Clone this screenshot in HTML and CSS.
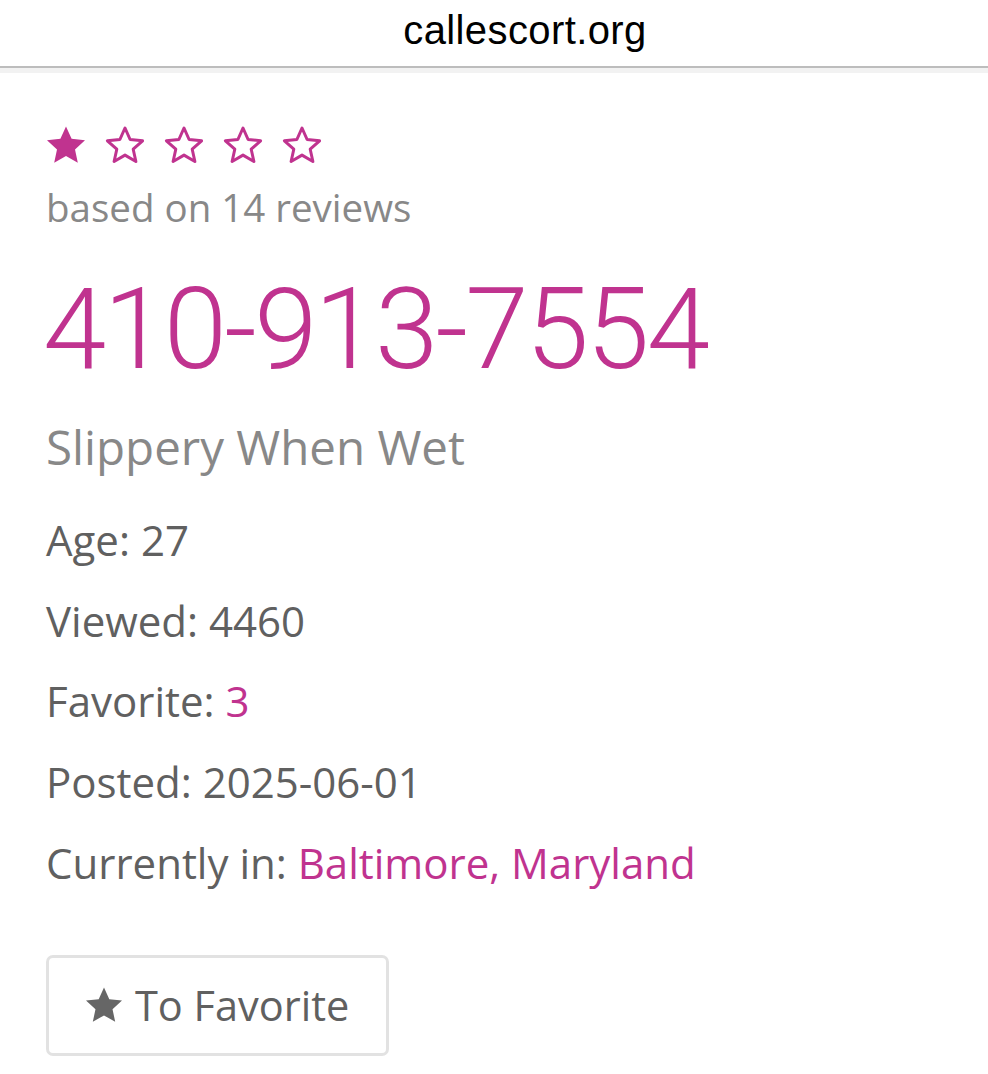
FILE: index.html
```html
<html>

<head>
  <link rel="stylesheet" href="styles.css">
</head>

<body>
  <div class="topbar">
    <span class="domain">callescort.org</span>
  </div>
  <div class="topline"></div>

  <div class="content">
    <div class="rating">
      <div class="stars">
        <svg class="star" viewBox="0 0 40 38"><path class="full" d="M20 0.5 L25.6 12.8 L39 14.3 L29 23.4 L31.8 36.7 L20 30 L8.2 36.7 L11 23.4 L1 14.3 L14.4 12.8 Z" /></svg>
        <svg class="star" viewBox="0 0 40 38"><path class="empty" d="M20 2 L25.1 13.5 L37.6 14.8 L28.2 23.2 L30.9 35.5 L20 29.1 L9.1 35.5 L11.8 23.2 L2.4 14.8 L14.9 13.5 Z" /></svg>
        <svg class="star" viewBox="0 0 40 38"><path class="empty" d="M20 2 L25.1 13.5 L37.6 14.8 L28.2 23.2 L30.9 35.5 L20 29.1 L9.1 35.5 L11.8 23.2 L2.4 14.8 L14.9 13.5 Z" /></svg>
        <svg class="star" viewBox="0 0 40 38"><path class="empty" d="M20 2 L25.1 13.5 L37.6 14.8 L28.2 23.2 L30.9 35.5 L20 29.1 L9.1 35.5 L11.8 23.2 L2.4 14.8 L14.9 13.5 Z" /></svg>
        <svg class="star" viewBox="0 0 40 38"><path class="empty" d="M20 2 L25.1 13.5 L37.6 14.8 L28.2 23.2 L30.9 35.5 L20 29.1 L9.1 35.5 L11.8 23.2 L2.4 14.8 L14.9 13.5 Z" /></svg>
      </div>
      <div class="reviews">based on 14 reviews</div>
    </div>

    <h1 class="phone">410-913-7554</h1>
    <h2 class="title">Slippery When Wet</h2>

    <div class="info">
      <p>Age: 27</p>
      <p>Viewed: 4460</p>
      <p>Favorite: <a href="#">3</a></p>
      <p>Posted: 2025-06-01</p>
      <p>Currently in: <a href="#">Baltimore, Maryland</a></p>
    </div>

    <button class="fav-btn">
      <svg class="btn-star" viewBox="0 0 40 38"><path d="M20 0.5 L25.6 12.8 L39 14.3 L29 23.4 L31.8 36.7 L20 30 L8.2 36.7 L11 23.4 L1 14.3 L14.4 12.8 Z" /></svg>
      <span>To Favorite</span>
    </button>
  </div>
</body>

</html>
```

FILE: styles.css
```css
body {
  margin: 0;
  padding: 0;
  background-color: #ffffff;
  font-family: "Open Sans", sans-serif;
  overflow: hidden;
}

.topbar {
  height: 68px;
  display: flex;
  justify-content: center;
  align-items: center;
  border-bottom: 2px solid #bdbdbd;
  box-sizing: border-box;
}

.domain {
  font-family: "Liberation Sans", Arial, sans-serif;
  font-size: 40px;
  letter-spacing: 0.4px;
  color: #000000;
  margin-left: 62px;
  margin-top: -6px;
}

.topline {
  height: 5px;
  background-color: #f2f2f2;
}

.content {
  padding: 0 46px;
}

.rating {
  padding-top: 53px;
}

.stars {
  display: flex;
  gap: 19px;
  height: 40px;
}

.star {
  width: 40px;
  height: 38px;
}

.star .full {
  fill: #c0338f;
}

.star .empty {
  fill: none;
  stroke: #c0338f;
  stroke-width: 3;
  stroke-linejoin: round;
}

.reviews {
  font-size: 38.5px;
  color: #888888;
  line-height: 40px;
  margin-top: 21px;
}

.phone {
  font-family: Roboto, sans-serif;
  font-weight: 300;
  font-size: 114px;
  letter-spacing: -2.8px;
  color: #c0338f;
  margin: 37px 0 0 -3px;
  line-height: 130px;
}

.title {
  font-weight: 400;
  font-size: 47.5px;
  color: #888888;
  margin: 23px 0 0 0;
  line-height: 60px;
}

.info {
  margin-top: 23px;
}

.info p {
  font-size: 42px;
  color: #606060;
  margin: 0;
  line-height: 80.7px;
}

.info a {
  color: #c0338f;
  text-decoration: none;
}

.fav-btn {
  margin-top: 51px;
  display: flex;
  align-items: center;
  gap: 12px;
  height: 101px;
  padding: 0 37px 0 36px;
  font-family: "Open Sans", sans-serif;
  font-size: 41.5px;
  color: #606060;
  background-color: #ffffff;
  border: 3px solid #e2e2e2;
  border-radius: 7px;
}

.btn-star {
  width: 38px;
  height: 36px;
  fill: #666666;
}
```
